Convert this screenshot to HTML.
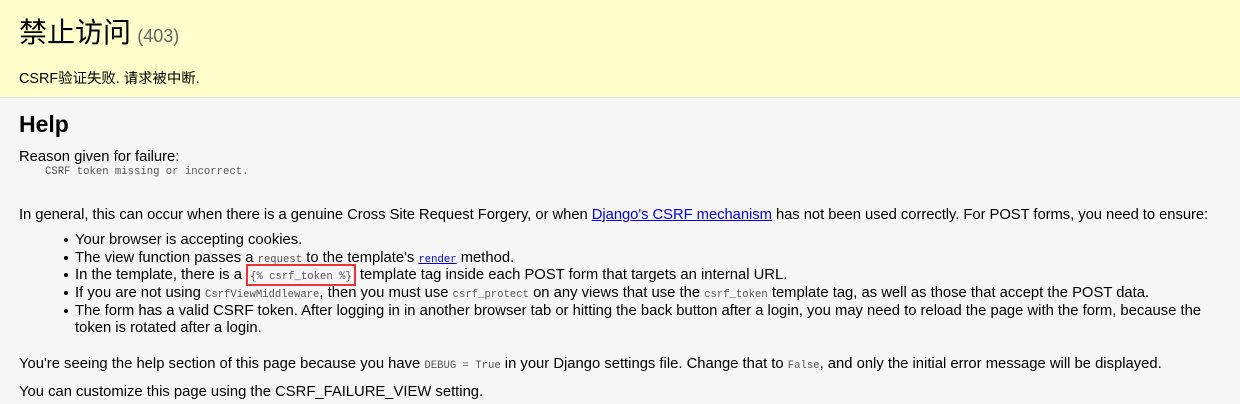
<!DOCTYPE html>
<html><head><meta charset="utf-8"><style>
body{margin:0;width:1240px;height:404px;overflow:hidden;background:#f6f6f6;font-family:"Liberation Sans","Noto Sans CJK SC",sans-serif;font-size:14.8px;color:#000;position:relative}
#top{position:absolute;left:0;top:0;width:1240px;height:97px;background:#ffffcc;border-bottom:1px solid #ddd}
.a{position:absolute;white-space:nowrap;line-height:18px}
code,.m{font-family:"Liberation Mono",monospace;font-size:10.6px;color:#555}
a{color:#00e;text-decoration:underline}
.b{position:absolute;left:64px;width:4px;height:4px;border-radius:50%;background:#000}
.box{border:2px solid #e33;padding:1px 2px}
</style></head><body>
<div id="top"></div>
<div class="a" style="left:19px;top:14px;line-height:34px;font-size:28px;font-family:'Noto Sans CJK SC',sans-serif">禁止访问 <span style="font-size:18px;color:#666;font-family:'Liberation Sans',sans-serif">(403)</span></div>
<div class="a" style="left:19px;top:70px;font-size:14.4px">CSRF验证失败. 请求被中断.</div>
<div class="a" style="left:19px;top:111px;font-size:23px;font-weight:bold;line-height:26px">Help</div>
<div class="a" style="left:19px;top:148px">Reason given for failure:</div>
<div class="a m" style="left:45px;top:165px;line-height:15px">CSRF token missing or incorrect.</div>
<div class="a" style="left:19px;top:206px;letter-spacing:-0.05px">In general, this can occur when there is a genuine Cross Site Request Forgery, or when <a>Django's CSRF mechanism</a> has not been used correctly. For POST forms, you need to ensure:</div>
<div class="b" style="top:238px"></div><div class="a" style="left:75px;top:231px">Your browser is accepting cookies.</div>
<div class="b" style="top:256px"></div><div class="a" style="left:75px;top:249px">The view function passes a <code>request</code> to the template's <a><code style="color:#00e">render</code></a> method.</div>
<div class="b" style="top:273px"></div><div class="a" style="left:75px;top:266px">In the template, there is a <span class="box"><code>{% csrf_token %}</code></span> template tag inside each POST form that targets an internal URL.</div>
<div class="b" style="top:291px"></div><div class="a" style="left:75px;top:284px">If you are not using <code>CsrfViewMiddleware</code>, then you must use <code>csrf_protect</code> on any views that use the <code>csrf_token</code> template tag, as well as those that accept the POST data.</div>
<div class="b" style="top:309px"></div><div class="a" style="left:75px;top:302px">The form has a valid CSRF token. After logging in in another browser tab or hitting the back button after a login, you may need to reload the page with the form, because the</div>
<div class="a" style="left:75px;top:319px">token is rotated after a login.</div>
<div class="a" style="left:19px;top:355px">You're seeing the help section of this page because you have <code>DEBUG = True</code> in your Django settings file. Change that to <code>False</code>, and only the initial error message will be displayed.</div>
<div class="a" style="left:19px;top:383px">You can customize this page using the CSRF_FAILURE_VIEW setting.</div>
</body></html>
